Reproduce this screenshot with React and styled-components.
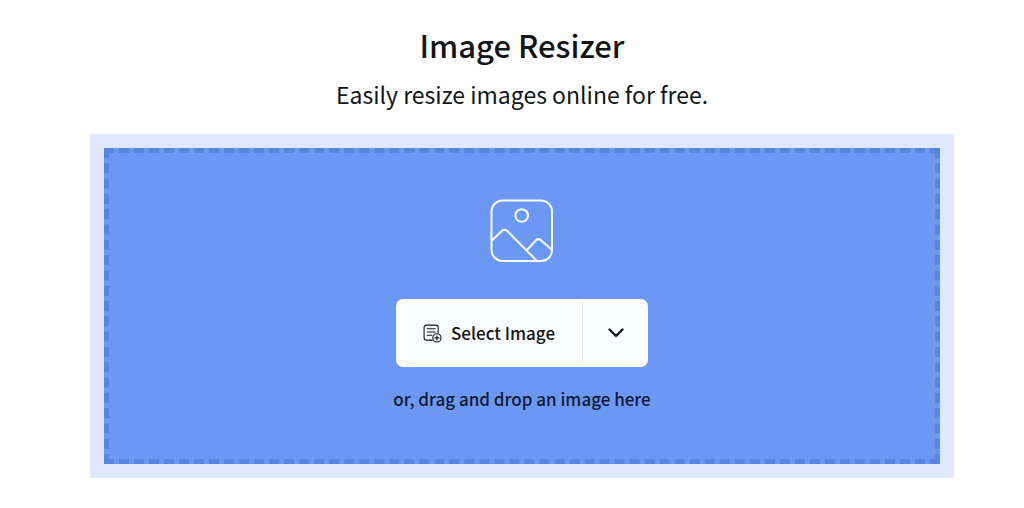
import React from "react";
import styled, { createGlobalStyle } from "styled-components";

const GlobalStyle = createGlobalStyle`
  *, *::before, *::after { box-sizing: border-box; }
  body {
    margin: 0;
    background: #fff;
    color: #111516;
    font-family: "Noto Sans CJK SC", "Noto Sans", sans-serif;
  }
`;

const Page = styled.main`
  padding: 23px 70px 30px 90px;
`;

const Header = styled.header`
  text-align: center;
`;

const Title = styled.h1`
  margin: 0;
  font-size: 31px;
  line-height: 44px;
  font-weight: 500;
`;

const Subtitle = styled.p`
  margin: 10px 0 0;
  font-size: 23px;
  line-height: 34px;
  font-weight: 400;
`;

const DropFrame = styled.section`
  margin-top: 23px;
  padding: 14px;
  background: #dfe8fe;
`;

const DropZone = styled.div`
  display: flex;
  flex-direction: column;
  align-items: center;
  padding: 46px 20px 47px;
  border: 5px dashed #5b85dc;
  background: #6c98f4;
`;

const PictureIcon = styled.svg`
  display: block;
  width: 64px;
  height: 64px;
  fill: none;
  stroke: #f8fbff;
  stroke-width: 2;
`;

const SplitButton = styled.div`
  display: flex;
  margin-top: 36px;
  height: 68px;
  border-radius: 7px;
  background: #fbfcfd;
`;

const PlainButton = styled.button`
  display: flex;
  align-items: center;
  justify-content: center;
  border: 0;
  background: none;
  color: #111516;
  font: inherit;
  cursor: pointer;
`;

const SelectButton = styled(PlainButton)`
  gap: 9px;
  padding: 0 27px;
  font-size: 17px;
  line-height: 24px;
  font-weight: 500;
`;

const MenuButton = styled(PlainButton)`
  width: 66px;
  margin: 3px 0;
  padding: 0;
  border-left: 1px solid #e9ebed;
`;

const LineIcon = styled.svg`
  display: block;
  fill: none;
  stroke: currentColor;
  stroke-width: ${(p) => p.$weight};
  stroke-linecap: round;
  stroke-linejoin: round;
`;

const Hint = styled.p`
  margin: 19px 0 0;
  font-size: 17px;
  line-height: 26px;
  font-weight: 500;
  color: #0c1a36;
`;

export default function App() {
  return (
    <>
      <GlobalStyle />
      <Page>
        <Header>
          <Title>Image Resizer</Title>
          <Subtitle>Easily resize images online for free.</Subtitle>
        </Header>
        <DropFrame>
          <DropZone>
            <PictureIcon viewBox="0 0 64 64" aria-hidden="true">
              <rect x="1.5" y="1.5" width="60.5" height="60.5" rx="11" />
              <circle cx="31.7" cy="16.5" r="6.3" />
              <path d="M1.5 42 L12 31.7 Q14.5 29.7 17 31.7 L47 62" />
              <path d="M36.5 51.5 L46 41.3 Q48.5 39 51 41.3 L61.5 50.5" />
            </PictureIcon>
            <SplitButton>
              <SelectButton type="button">
                <LineIcon $weight={1.1} width="19" height="19" viewBox="0 0 19 19" aria-hidden="true">
                  <path d="M15.2 8.5V3.5a2.4 2.4 0 0 0-2.4-2.4H3.5a2.4 2.4 0 0 0-2.4 2.4v10.2a2.4 2.4 0 0 0 2.4 2.4h5.6" />
                  <path d="M4.2 4.8h8M4.2 8h8M4.2 11.2h4.6" />
                  <circle cx="13.9" cy="13.9" r="4.1" />
                  <path d="M13.9 11.9v4M11.9 13.9h4" />
                </LineIcon>
                Select Image
              </SelectButton>
              <MenuButton type="button" aria-label="More image sources">
                <LineIcon $weight={2.3} width="16" height="10" viewBox="0 0 16 10" aria-hidden="true">
                  <path d="M1.5 1.5 8 8l6.5-6.5" />
                </LineIcon>
              </MenuButton>
            </SplitButton>
            <Hint>or, drag and drop an image here</Hint>
          </DropZone>
        </DropFrame>
      </Page>
    </>
  );
}
